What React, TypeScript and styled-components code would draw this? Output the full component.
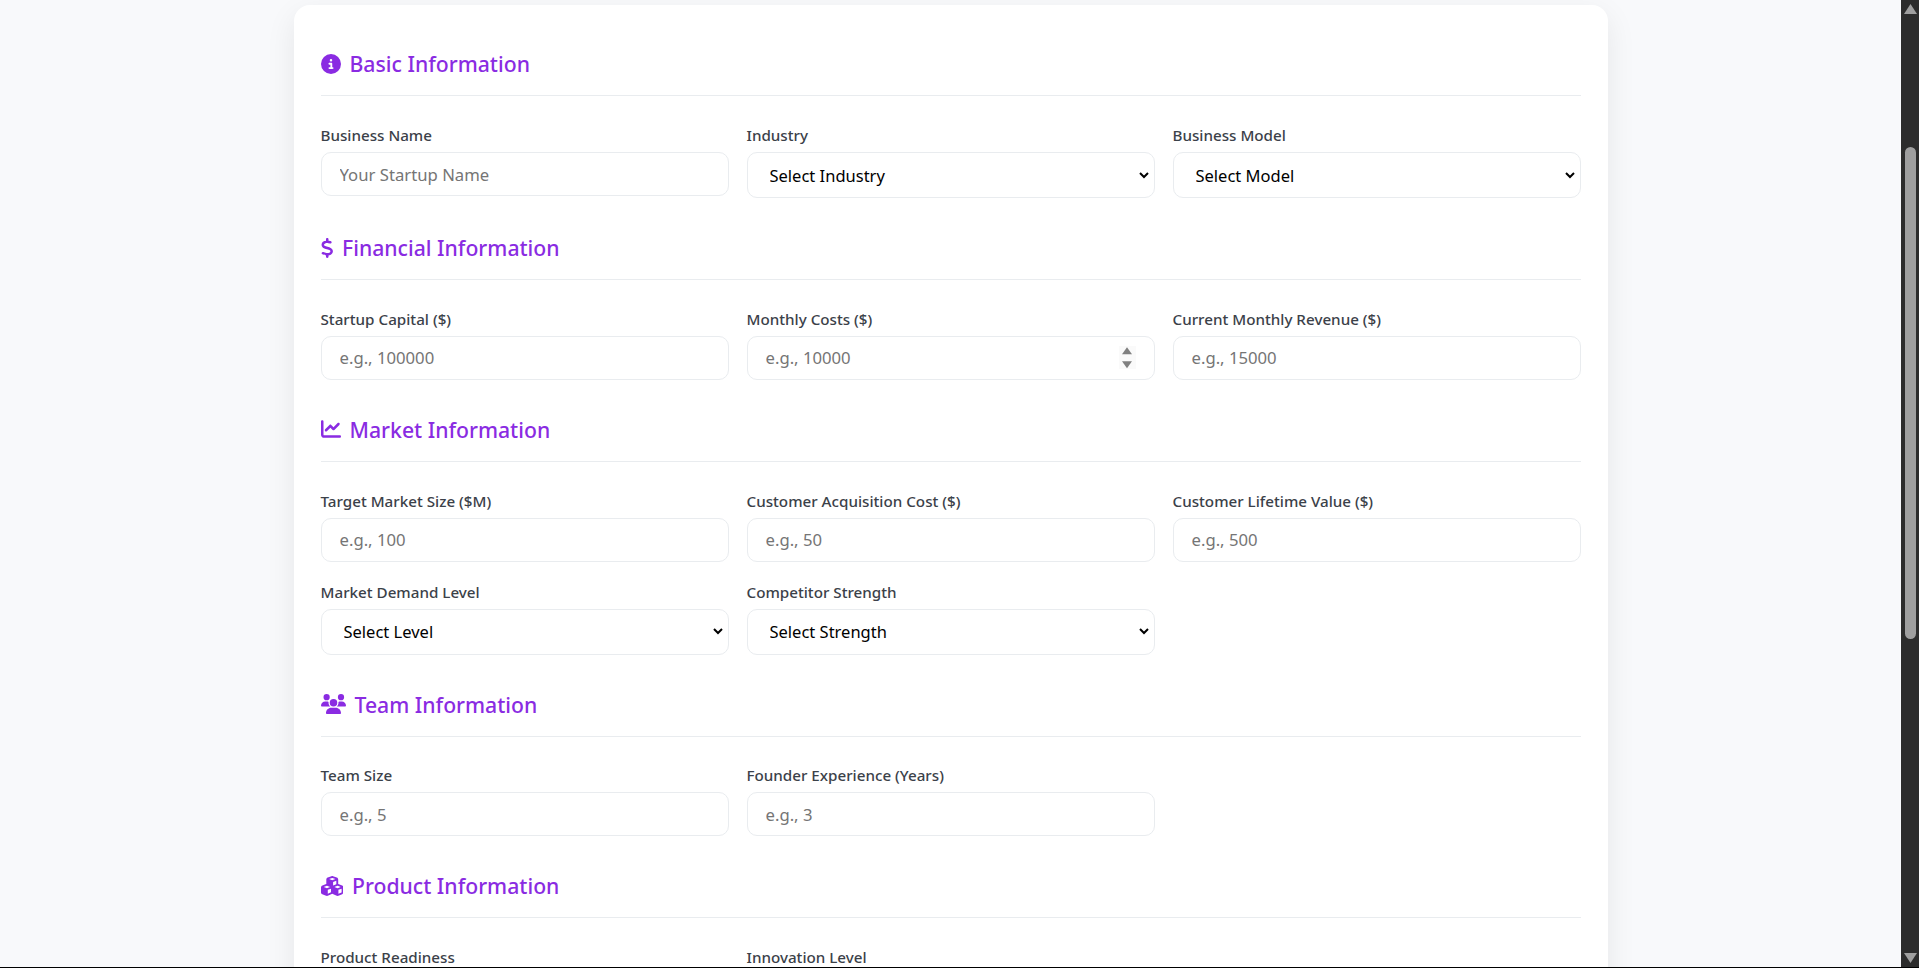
import { ReactNode } from "react";
import styled, { createGlobalStyle } from "styled-components";
import { FaChartLine, FaCircleInfo, FaCubes, FaDollarSign, FaUsers } from "react-icons/fa6";

const GlobalStyle = createGlobalStyle`
  html, body {
    margin: 0;
    height: 100%;
    overflow: hidden;
    background: #000;
  }
  * {
    box-sizing: border-box;
  }
`;

const Heading = ({ icon, iconWidth, children }: { icon: ReactNode; iconWidth: number; children: ReactNode }) => (
  <SectionTitle $iconWidth={iconWidth}>
    {icon}
    {children}
  </SectionTitle>
);

const TextField = ({ label, placeholder, spinner }: { label: string; placeholder: string; spinner?: boolean }) => (
  <Group>
    <Label>{label}</Label>
    <InputWrap>
      <Input type="text" placeholder={placeholder} />
      {spinner && (
        <Spinner>
          <svg width="10" height="7.5" viewBox="0 0 10 7"><path d="M5 0 L10 7 L0 7 Z" /></svg>
          <svg width="10" height="7.5" viewBox="0 0 10 7"><path d="M0 0 L10 0 L5 7 Z" /></svg>
        </Spinner>
      )}
    </InputWrap>
  </Group>
);

const SelectField = ({ label, value }: { label: string; value: string }) => (
  <Group>
    <Label>{label}</Label>
    <Select defaultValue={value}>
      <option>{value}</option>
    </Select>
  </Group>
);

const App = () => {
  return (
    <Page>
      <GlobalStyle />
      <Main>
        <Card>
          <Section>
            <Heading icon={<FaCircleInfo />} iconWidth={20}>Basic Information</Heading>
            <FieldGrid>
              <TextField label="Business Name" placeholder="Your Startup Name" />
              <SelectField label="Industry" value="Select Industry" />
              <SelectField label="Business Model" value="Select Model" />
            </FieldGrid>
          </Section>
          <Section>
            <Heading icon={<FaDollarSign />} iconWidth={12.5}>Financial Information</Heading>
            <FieldGrid>
              <TextField label="Startup Capital ($)" placeholder="e.g., 100000" />
              <TextField label="Monthly Costs ($)" placeholder="e.g., 10000" spinner />
              <TextField label="Current Monthly Revenue ($)" placeholder="e.g., 15000" />
            </FieldGrid>
          </Section>
          <Section>
            <Heading icon={<FaChartLine />} iconWidth={20}>Market Information</Heading>
            <FieldGrid>
              <TextField label="Target Market Size ($M)" placeholder="e.g., 100" />
              <TextField label="Customer Acquisition Cost ($)" placeholder="e.g., 50" />
              <TextField label="Customer Lifetime Value ($)" placeholder="e.g., 500" />
              <SelectField label="Market Demand Level" value="Select Level" />
              <SelectField label="Competitor Strength" value="Select Strength" />
            </FieldGrid>
          </Section>
          <Section>
            <Heading icon={<FaUsers />} iconWidth={25}>Team Information</Heading>
            <FieldGrid>
              <TextField label="Team Size" placeholder="e.g., 5" />
              <TextField label="Founder Experience (Years)" placeholder="e.g., 3" />
            </FieldGrid>
          </Section>
          <Section>
            <Heading icon={<FaCubes />} iconWidth={22.5}>Product Information</Heading>
            <FieldGrid>
              <SelectField label="Product Readiness" value="Select Readiness" />
              <SelectField label="Innovation Level" value="Select Level" />
            </FieldGrid>
          </Section>
        </Card>
      </Main>
      <ScrollTrack>
        <ScrollArrow viewBox="0 0 13 10">
          <path d="M6.5 0 L13 10 L0 10 Z" />
        </ScrollArrow>
        <ScrollThumb />
        <ScrollArrow viewBox="0 0 13 10">
          <path d="M0 0 L13 0 L6.5 10 Z" />
        </ScrollArrow>
      </ScrollTrack>
    </Page>
  );
};

export default App;

const Page = styled.div`
  display: flex;
  height: 967px;
  overflow: hidden;
  background: #f8f9fb;
  font-family: "Noto Sans", "Open Sans", sans-serif;
`;

const Main = styled.main`
  flex: 1;
  min-width: 0;
  overflow: hidden;
  padding-top: 5px;
`;

const Card = styled.div`
  width: 1314px;
  margin: 0 auto;
  padding: 41.3px 27px 27px;
  background: #fff;
  border-radius: 16px;
  box-shadow: 0 10px 30px rgba(0, 0, 0, 0.08);
`;

const Section = styled.section`
  margin-bottom: 32px;
`;

const SectionTitle = styled.h3<{ $iconWidth: number }>`
  display: flex;
  align-items: center;
  gap: 9px;
  height: 50px;
  margin: 0 0 23.75px;
  padding-bottom: 14px;
  border-bottom: 1px solid #e9ecef;
  color: #8a2be2;
  font-size: 21.2px;
  font-weight: 500;

  svg {
    flex: none;
    width: ${(p) => p.$iconWidth}px;
    height: 20px;
  }
`;

const FieldGrid = styled.div`
  display: grid;
  grid-template-columns: repeat(3, 408px);
  column-gap: 18px;
  row-gap: 15px;
`;

const Group = styled.div`
  display: flex;
  flex-direction: column;
`;

const Label = styled.label`
  height: 32px;
  padding-top: 4px;
  color: #3b4149;
  font-size: 15.2px;
  font-weight: 500;
  line-height: 22px;
`;

const InputWrap = styled.div`
  position: relative;
`;

const Input = styled.input`
  display: block;
  width: 100%;
  height: 44px;
  padding: 0 18px;
  background: #fff;
  border: 1px solid #e9ecef;
  border-radius: 10px;
  font-family: inherit;
  font-size: 16.7px;
  outline: none;
`;

const Select = styled.select`
  display: block;
  width: 100%;
  height: 46px;
  padding: 0 22px;
  appearance: none;
  background: #fff url("data:image/svg+xml,%3Csvg xmlns='http://www.w3.org/2000/svg' width='10' height='7' viewBox='0 0 10 7'%3E%3Cpath d='M1 1 L5 5 L9 1' fill='none' stroke='%23000' stroke-width='2'/%3E%3C/svg%3E") no-repeat right 5px center;
  border: 1px solid #e9ecef;
  border-radius: 10px;
  color: #000;
  font-family: inherit;
  font-size: 16.5px;
  outline: none;
`;

const Spinner = styled.div`
  position: absolute;
  top: 10px;
  right: 19px;
  width: 17px;
  height: 23px;
  display: flex;
  flex-direction: column;
  align-items: center;
  justify-content: flex-end;
  gap: 6.5px;
  background: #fafafa;
  fill: #808080;
`;

const ScrollTrack = styled.div`
  flex: none;
  width: 18px;
  display: flex;
  flex-direction: column;
  align-items: center;
  padding: 4px 0;
  background: #2c2c2c;
`;

const ScrollArrow = styled.svg`
  display: block;
  flex: none;
  width: 13px;
  height: 10px;
  fill: #9f9f9f;
`;

const ScrollThumb = styled.div`
  flex: none;
  width: 11px;
  height: 492px;
  margin: 133px 0 auto;
  background: #9f9f9f;
  border-radius: 6px;
`;
